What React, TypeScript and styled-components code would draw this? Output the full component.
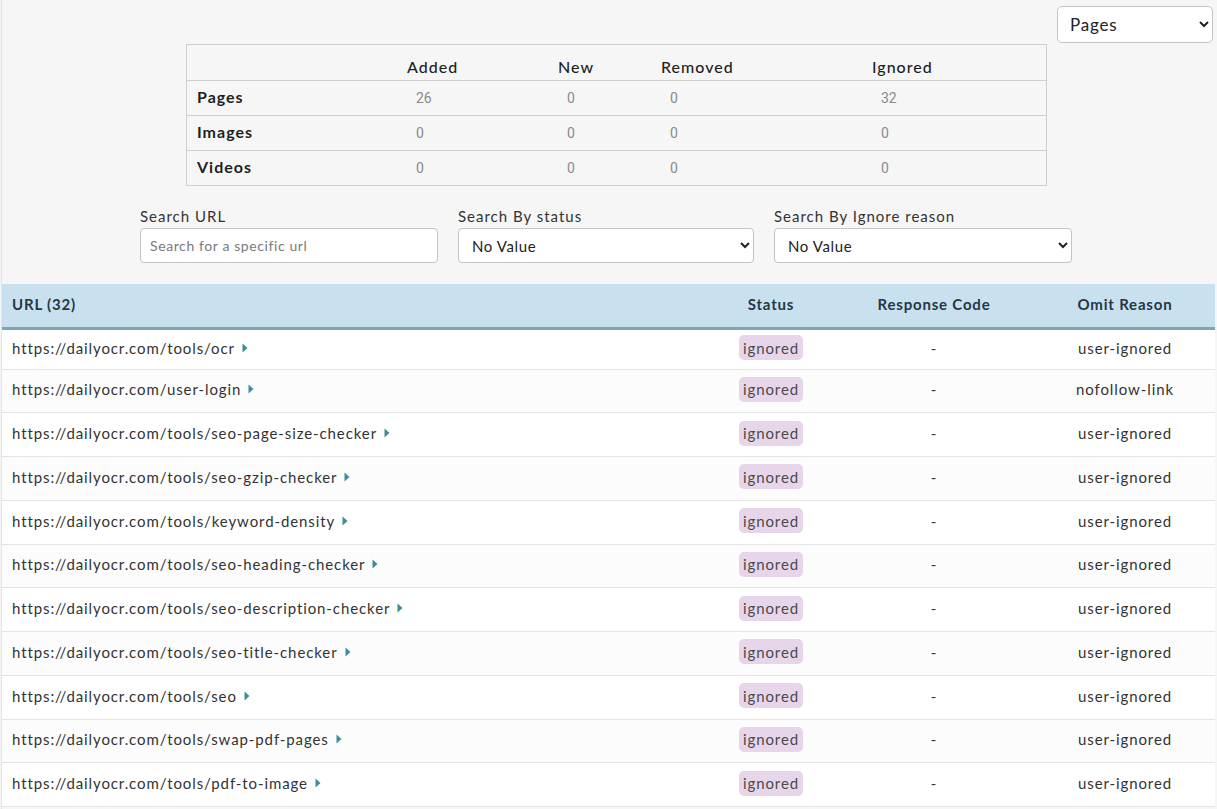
import React from "react";
import styled, { createGlobalStyle } from "styled-components";

const GlobalStyle = createGlobalStyle`
  body {
    margin: 0;
    background: #f6f6f6;
    font-family: "Lato", "Liberation Sans", sans-serif;
    color: #333;
  }
`;

const Page = styled.div`
  min-height: 100vh;
  margin-left: 1px;
  border-left: 1px solid #e2e2e2;
  padding-top: 6px;
  box-sizing: border-box;
`;

const TopBar = styled.div`
  display: flex;
  justify-content: flex-end;
  padding-right: 4px;
  margin-bottom: 1px;
`;

const TypeSelect = styled.select`
  width: 156px;
  height: 37px;
  padding: 0 8px;
  border: 1px solid #c4c4c4;
  border-radius: 5px;
  background: #fff;
  font-family: inherit;
  font-size: 17px;
  letter-spacing: 0.8px;
  color: #222;
`;

const StatsGrid = styled.div`
  margin-left: 184px;
  width: 861px;
  display: grid;
  grid-template-columns: 210px 151px 103px 211px 1fr;
  border: 1px solid #cfcfcf;
  box-sizing: border-box;
`;

const StatCell = styled.div<{ $head?: boolean; $label?: boolean; $last?: boolean }>`
  height: ${(p) => (p.$head ? "36px" : p.$last ? "34px" : "35px")};
  display: flex;
  align-items: center;
  padding-left: ${(p) => (p.$label || p.$head ? "10px" : "19px")};
  padding-top: ${(p) => (p.$head ? "8px" : "0")};
  padding-bottom: ${(p) => (p.$label ? "3px" : "0")};
  box-sizing: border-box;
  border-bottom: ${(p) => (p.$last ? "none" : "1px solid #cfcfcf")};
  font-family: ${(p) =>
    p.$head || p.$label ? "inherit" : '"Roboto", "Liberation Sans", sans-serif'};
  font-size: ${(p) => (p.$head || p.$label ? "16px" : "14px")};
  font-weight: ${(p) => (p.$label ? 700 : p.$head ? 500 : 400)};
  letter-spacing: ${(p) => (p.$head || p.$label ? "1px" : "0")};
  color: ${(p) => (p.$head || p.$label ? "#1f1f1f" : "#8a8a8a")};
`;

const Filters = styled.div`
  display: flex;
  gap: 20px;
  padding-left: 138px;
  margin-top: 21px;
`;

const FilterGroup = styled.div<{ $w: number }>`
  display: flex;
  flex-direction: column;
  gap: 3px;
  width: ${(p) => p.$w}px;
`;

const FilterLabel = styled.label`
  font-size: 15px;
  letter-spacing: 1px;
  color: #333;
`;

const SearchInput = styled.input`
  height: 35px;
  padding: 0 9px;
  border: 1px solid #c4c4c4;
  border-radius: 4px;
  background: #fff;
  font-family: inherit;
  font-size: 14px;
  letter-spacing: 0.6px;
  box-sizing: border-box;
  &::placeholder {
    color: #7a7a7a;
  }
`;

const FilterSelect = styled.select`
  height: 35px;
  padding: 0 9px;
  border: 1px solid #c4c4c4;
  border-radius: 4px;
  background: #fff;
  font-family: inherit;
  font-size: 15px;
  letter-spacing: 0.6px;
  color: #222;
`;

const Table = styled.div`
  margin-top: 21px;
  margin-right: 2px;
`;

const cols = "1fr 152px 174px 194px";

const HeadRow = styled.div`
  display: grid;
  grid-template-columns: ${cols};
  height: 46px;
  background: #c9e1ef;
  border-bottom: 3px solid #74a9b8;
  box-sizing: border-box;
`;

const HeadCell = styled.div<{ $left?: boolean; $shift?: number }>`
  display: flex;
  align-items: center;
  justify-content: ${(p) => (p.$left ? "flex-start" : "center")};
  padding-left: ${(p) => (p.$left ? "10px" : `${p.$shift ?? 0}px`)};
  padding-bottom: 4px;
  font-size: 15px;
  font-weight: 700;
  letter-spacing: 0.8px;
  color: #243746;
`;

const Row = styled.div<{ $alt: boolean; $first: boolean }>`
  display: grid;
  grid-template-columns: ${cols};
  height: ${(p) => (p.$first ? "39.5px" : "43.75px")};
  background: ${(p) => (p.$alt ? "#fcfcfd" : "#fff")};
  border-bottom: 1px solid #e4e4e6;
  box-sizing: border-box;
`;

const Cell = styled.div<{ $left?: boolean; $shift?: number }>`
  display: flex;
  align-items: center;
  justify-content: ${(p) => (p.$left ? "flex-start" : "center")};
  padding-left: ${(p) => (p.$left ? "10px" : `${p.$shift ?? 0}px`)};
  padding-bottom: 3px;
  font-size: 15px;
  letter-spacing: 0.9px;
  color: #333;
`;

const Caret = styled.svg`
  margin-left: 7px;
  flex: none;
`;

const Badge = styled.span`
  display: inline-flex;
  align-items: center;
  height: 25px;
  padding: 0 4px;
  border-radius: 5px;
  background: #e7d6ea;
  color: #4a4a4a;
  font-size: 15px;
  letter-spacing: 0.9px;
`;

const stats = [
  { name: "Pages", v: ["26", "0", "0", "32"] },
  { name: "Images", v: ["0", "0", "0", "0"] },
  { name: "Videos", v: ["0", "0", "0", "0"] },
];

const rows = [
  ["https://dailyocr.com/tools/ocr", "user-ignored"],
  ["https://dailyocr.com/user-login", "nofollow-link"],
  ["https://dailyocr.com/tools/seo-page-size-checker", "user-ignored"],
  ["https://dailyocr.com/tools/seo-gzip-checker", "user-ignored"],
  ["https://dailyocr.com/tools/keyword-density", "user-ignored"],
  ["https://dailyocr.com/tools/seo-heading-checker", "user-ignored"],
  ["https://dailyocr.com/tools/seo-description-checker", "user-ignored"],
  ["https://dailyocr.com/tools/seo-title-checker", "user-ignored"],
  ["https://dailyocr.com/tools/seo", "user-ignored"],
  ["https://dailyocr.com/tools/swap-pdf-pages", "user-ignored"],
  ["https://dailyocr.com/tools/pdf-to-image", "user-ignored"],
];

export default function App() {
  return (
    <>
      <GlobalStyle />
      <Page>
        <TopBar>
          <TypeSelect defaultValue="pages">
            <option value="pages">Pages</option>
            <option value="images">Images</option>
            <option value="videos">Videos</option>
          </TypeSelect>
        </TopBar>

        <StatsGrid>
          <StatCell $head />
          <StatCell $head>Added</StatCell>
          <StatCell $head>New</StatCell>
          <StatCell $head>Removed</StatCell>
          <StatCell $head>Ignored</StatCell>
          {stats.map((s, i) => (
            <React.Fragment key={s.name}>
              <StatCell $label $last={i === stats.length - 1}>
                {s.name}
              </StatCell>
              {s.v.map((v, j) => (
                <StatCell key={j} $last={i === stats.length - 1}>
                  {v}
                </StatCell>
              ))}
            </React.Fragment>
          ))}
        </StatsGrid>

        <Filters>
          <FilterGroup $w={298}>
            <FilterLabel>Search URL</FilterLabel>
            <SearchInput placeholder="Search for a specific url" />
          </FilterGroup>
          <FilterGroup $w={296}>
            <FilterLabel>Search By status</FilterLabel>
            <FilterSelect defaultValue="">
              <option value="">No Value</option>
            </FilterSelect>
          </FilterGroup>
          <FilterGroup $w={298}>
            <FilterLabel>Search By Ignore reason</FilterLabel>
            <FilterSelect defaultValue="">
              <option value="">No Value</option>
            </FilterSelect>
          </FilterGroup>
        </Filters>

        <Table>
          <HeadRow>
            <HeadCell $left>URL (32)</HeadCell>
            <HeadCell>Status</HeadCell>
            <HeadCell>Response Code</HeadCell>
            <HeadCell $shift={14}>Omit Reason</HeadCell>
          </HeadRow>
          {rows.map(([url, reason], i) => (
            <Row key={url} $alt={i % 2 === 1} $first={i === 0}>
              <Cell $left>
                {url}
                <Caret width="6" height="10" viewBox="0 0 6 10">
                  <path d="M0.5 0.5 L5.5 5 L0.5 9.5 Z" fill="#3f8b9c" />
                </Caret>
              </Cell>
              <Cell>
                <Badge>ignored</Badge>
              </Cell>
              <Cell>-</Cell>
              <Cell $shift={14}>{reason}</Cell>
            </Row>
          ))}
        </Table>
      </Page>
    </>
  );
}
